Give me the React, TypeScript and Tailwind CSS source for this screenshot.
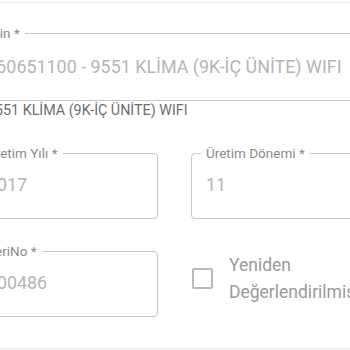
import React from "react";

function Field({ label, value }: { label: string; value: string }) {
  return (
    <fieldset className="border border-[#c6c6c6] rounded-[4px] pl-[9px] pr-[9px] pb-[9px] min-w-0">
      <legend className="px-[5px] text-[13.5px] leading-[16px] text-[#8a8a8a] whitespace-nowrap">{label}</legend>
      <div className="h-[48px] flex items-center pl-[5px] text-[17.8px] text-[#b5b5b5] whitespace-nowrap">{value}</div>
    </fieldset>
  );
}

export default function App() {
  return (
    <div className="w-[350px] h-[350px] overflow-hidden bg-white flex flex-col font-['Roboto',sans-serif]">
      <div className="mt-[2px] h-px shrink-0 bg-[#eeeeee]" />
      <div className="ml-[-69px] w-[460px] shrink-0 mt-[22px]">
        <fieldset className="border border-[#c6c6c6] rounded-[4px] pl-[9px] pr-[9px] pb-[7px]">
          <legend className="px-[5px] text-[13.5px] leading-[16px] text-[#8a8a8a] whitespace-nowrap">Ürün Seçin *</legend>
          <div className="h-[52px] flex items-center pl-[5px] text-[17.9px] text-[#b5b5b5] whitespace-nowrap">
            2153060651100 - 9551 KLİMA (9K-İÇ ÜNİTE) WIFI
          </div>
        </fieldset>
        <div className="mt-px pl-[56px] text-[14.3px] leading-[16px] text-[#6e6e6e] whitespace-nowrap">
          9551 KLİMA (9K-İÇ ÜNİTE) WIFI
        </div>
      </div>
      <div className="ml-[-28px] w-[405px] shrink-0 mt-[27px] grid grid-cols-2 gap-x-[33px] gap-y-[24px]">
        <Field label="Üretim Yılı *" value="2017" />
        <Field label="Üretim Dönemi *" value="11" />
        <Field label="SeriNo *" value="100486" />
        <div className="mt-[-3px] flex items-center gap-[16px] pl-px">
          <div className="w-[21px] h-[21px] shrink-0 border-2 border-[#b9b9b9] rounded-[2px]" />
          <div className="text-[17.5px] leading-[27px] text-[#9a9a9a]">Yeniden Değerlendirilmiş</div>
        </div>
      </div>
      <div className="mt-[31px] h-px shrink-0 bg-[#eeeeee]" />
    </div>
  );
}
